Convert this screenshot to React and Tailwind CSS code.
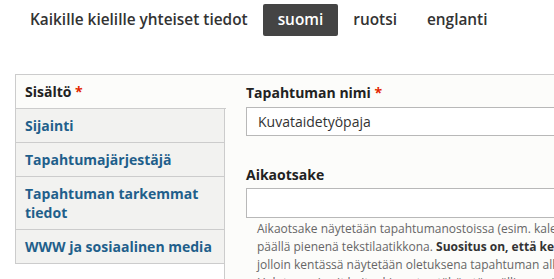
import React from 'react';

const langTabs = [
  { label: 'Kaikille kielille yhteiset tiedot', active: false },
  { label: 'suomi', active: true },
  { label: 'ruotsi', active: false },
  { label: 'englanti', active: false },
];

const sideTabs = [
  'Sijainti',
  'Tapahtumajärjestäjä',
  'Tapahtuman tarkemmat tiedot',
  'WWW ja sosiaalinen media',
];

const App = () => {
  return (
    <div
      className="w-[554px] h-[279px] overflow-hidden bg-white text-[#333]"
      style={{ fontFamily: '"Open Sans", "DejaVu Sans", sans-serif' }}
    >
      <div className="w-[900px]">
        <ul className="flex ml-[15px] mt-[4px]">
          {langTabs.map((tab) => (
            <li
              key={tab.label}
              className={
                tab.active
                  ? 'px-[15px] py-[6px] text-[15.4px] leading-[20px] font-semibold bg-[#444] text-white rounded-[2px]'
                  : 'px-[15px] py-[6px] text-[15.4px] leading-[20px] font-semibold text-[#333]'
              }
            >
              {tab.label}
            </li>
          ))}
        </ul>

        <div className="mt-[38px] ml-[15px] flex border-t border-[#ccc]">
          <ul className="w-[210px] shrink-0 self-start border-l border-b border-[#ccc] bg-[#f2f2f0] relative z-10">
            <li className="-mr-px bg-[#fcfcfa] border-b border-[#ccc] pl-[9px] py-[7px] text-[14px] leading-[19px] font-bold text-[#222]">
              Sisältö <span className="text-[#e32700]">*</span>
            </li>
            {sideTabs.map((item, i) => (
              <li
                key={item}
                className={
                  i === sideTabs.length - 1
                    ? 'pl-[9px] pr-3 py-[7px] text-[14px] leading-[19px] font-bold text-[#1f5f8b] border-r border-[#ccc]'
                    : 'pl-[9px] pr-3 py-[7px] text-[14px] leading-[19px] font-bold text-[#1f5f8b] border-r border-b border-[#ccc]'
                }
              >
                {item}
              </li>
            ))}
          </ul>

          <div className="flex-1 -ml-px border-l border-[#ccc] bg-[#fcfcfa] pl-[21px] pt-[8px] pb-10">
            <label className="block text-[14px] leading-[20px] font-bold text-[#222]">
              Tapahtuman nimi <span className="text-[#e32700]">*</span>
            </label>
            <div className="mt-[4px] h-[29px] w-[600px] border border-[#b8b8b8] bg-white px-[11px] text-[14px] leading-[27px] text-[#333]">
              Kuvataidetyöpaja
            </div>

            <label className="block mt-[29px] text-[14px] leading-[20px] font-bold text-[#222]">
              Aikaotsake
            </label>
            <div className="mt-[3px] h-[30px] w-[600px] border border-[#b8b8b8] bg-white" />
            <p className="mt-[2px] pl-[11px] text-[12px] leading-[18px] text-[#666] whitespace-nowrap">
              Aikaotsake näytetään tapahtumanostoissa (esim. kalenterinäkymässä) kuvan
              <br />
              päällä pienenä tekstilaatikkona.{' '}
              <strong className="font-bold text-[#333]">Suositus on, että kenttä jätetään tyhjäksi,</strong>
              <br />
              jolloin kentässä näytetään oletuksena tapahtuman alkamisaika.
              <br />
              Halutessasi voit kuitenkin antaa tähän täsmällisemmän aikatiedon.
            </p>
          </div>
        </div>
      </div>
    </div>
  );
};

export default App;
